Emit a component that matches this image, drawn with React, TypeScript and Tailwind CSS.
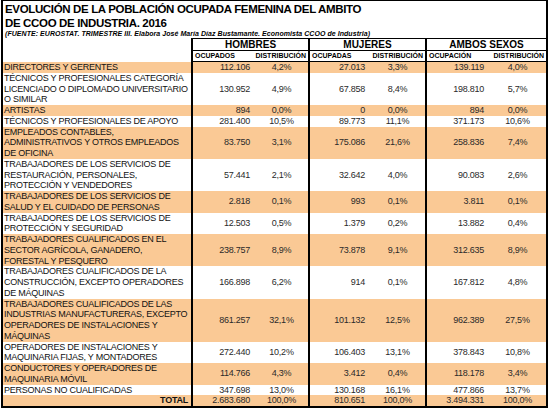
type Row = {
  label: string[]
  h: [string, string]
  m: [string, string]
  a: [string, string]
}

const rows: Row[] = [
  { label: ["DIRECTORES Y GERENTES"], h: ["112.106", "4,2%"], m: ["27.013", "3,3%"], a: ["139.119", "4,0%"] },
  {
    label: ["TÉCNICOS Y PROFESIONALES CATEGORÍA", "LICENCIADO O DIPLOMADO UNIVERSITARIO", "O SIMILAR"],
    h: ["130.952", "4,9%"],
    m: ["67.858", "8,4%"],
    a: ["198.810", "5,7%"],
  },
  { label: ["ARTISTAS"], h: ["894", "0,0%"], m: ["0", "0,0%"], a: ["894", "0,0%"] },
  { label: ["TÉCNICOS Y PROFESIONALES DE APOYO"], h: ["281.400", "10,5%"], m: ["89.773", "11,1%"], a: ["371.173", "10,6%"] },
  {
    label: ["EMPLEADOS CONTABLES,", "ADMINISTRATIVOS Y OTROS EMPLEADOS", "DE OFICINA"],
    h: ["83.750", "3,1%"],
    m: ["175.086", "21,6%"],
    a: ["258.836", "7,4%"],
  },
  {
    label: ["TRABAJADORES DE LOS SERVICIOS DE", "RESTAURACIÓN, PERSONALES,", "PROTECCIÓN Y VENDEDORES"],
    h: ["57.441", "2,1%"],
    m: ["32.642", "4,0%"],
    a: ["90.083", "2,6%"],
  },
  {
    label: ["TRABAJADORES DE LOS SERVICIOS DE", "SALUD Y EL CUIDADO DE PERSONAS"],
    h: ["2.818", "0,1%"],
    m: ["993", "0,1%"],
    a: ["3.811", "0,1%"],
  },
  {
    label: ["TRABAJADORES DE LOS SERVICIOS DE", "PROTECCIÓN Y SEGURIDAD"],
    h: ["12.503", "0,5%"],
    m: ["1.379", "0,2%"],
    a: ["13.882", "0,4%"],
  },
  {
    label: ["TRABAJADORES CUALIFICADOS EN EL", "SECTOR AGRÍCOLA, GANADERO,", "FORESTAL Y PESQUERO"],
    h: ["238.757", "8,9%"],
    m: ["73.878", "9,1%"],
    a: ["312.635", "8,9%"],
  },
  {
    label: ["TRABAJADORES CUALIFICADOS DE LA", "CONSTRUCCIÓN, EXCEPTO OPERADORES", "DE MÁQUINAS"],
    h: ["166.898", "6,2%"],
    m: ["914", "0,1%"],
    a: ["167.812", "4,8%"],
  },
  {
    label: [
      "TRABAJADORES CUALIFICADOS DE LAS",
      "INDUSTRIAS MANUFACTURERAS, EXCEPTO",
      "OPERADORES DE INSTALACIONES Y",
      "MÁQUINAS",
    ],
    h: ["861.257", "32,1%"],
    m: ["101.132", "12,5%"],
    a: ["962.389", "27,5%"],
  },
  {
    label: ["OPERADORES DE INSTALACIONES Y", "MAQUINARIA FIJAS, Y MONTADORES"],
    h: ["272.440", "10,2%"],
    m: ["106.403", "13,1%"],
    a: ["378.843", "10,8%"],
  },
  {
    label: ["CONDUCTORES Y OPERADORES DE", "MAQUINARIA MÓVIL"],
    h: ["114.766", "4,3%"],
    m: ["3.412", "0,4%"],
    a: ["118.178", "3,4%"],
  },
  { label: ["PERSONAS NO CUALIFICADAS"], h: ["347.698", "13,0%"], m: ["130.168", "16,1%"], a: ["477.866", "13,7%"] },
]

const total: Row = { label: ["TOTAL"], h: ["2.683.680", "100,0%"], m: ["810.651", "100,0%"], a: ["3.494.331", "100,0%"] }

const cols = "grid grid-cols-[190px_62px_55px_60px_57px_62px_57px]"

function DataRow({ row, shaded, isTotal }: { row: Row; shaded: boolean; isTotal?: boolean }) {
  const bg = shaded ? "bg-[#fac995]" : "bg-white"
  const num = "flex items-center justify-end pr-[5px] text-[#2a2a2a]"
  const pct = "flex items-center justify-center text-[#2a2a2a]"
  return (
    <div className={`${cols} ${bg} text-[9px] leading-[10.75px] tracking-[-0.25px]`}>
      <div
        className={`border-r-2 border-black pl-[1px] text-[#111] ${
          isTotal ? "text-right pr-[3px] font-bold" : ""
        }`}
      >
        {row.label.map((line) => (
          <div key={line} className="whitespace-nowrap">
            {line}
          </div>
        ))}
      </div>
      <div className={num}>{row.h[0]}</div>
      <div className={`${pct} border-r-2 border-black`}>{row.h[1]}</div>
      <div className={num}>{row.m[0]}</div>
      <div className={`${pct} border-r-2 border-black`}>{row.m[1]}</div>
      <div className={num}>{row.a[0]}</div>
      <div className={pct}>{row.a[1]}</div>
    </div>
  )
}

export default function App() {
  return (
    <div className="h-[415px] w-[550px] bg-white font-['Liberation_Sans',Arial,sans-serif] text-black">
      <div className="ml-[1px] w-[547px] border-x-2 border-b-2 border-t border-black">
        <div className="px-[2px] pt-[1px]">
          <p className="text-[11.5px] font-bold leading-[14px] tracking-[-0.35px]">
            EVOLUCIÓN DE LA POBLACIÓN OCUPADA FEMENINA DEL AMBITO
          </p>
          <p className="text-[11.5px] font-bold leading-[14px] tracking-[-0.35px]">DE CCOO DE INDUSTRIA. 2016</p>
          <p className="whitespace-nowrap text-[7px] font-bold italic leading-[8px] tracking-[0.05px]">
            (FUENTE: EUROSTAT. TRIMESTRE III. Elabora José María Díaz Bustamante. Economista CCOO de Industria)
          </p>
        </div>

        <div className="grid grid-cols-[190px_117px_117px_119px]">
          <div className="row-span-2 border-r-2 border-black" />
          {["HOMBRES", "MUJERES", "AMBOS SEXOS"].map((g, i) => (
            <div
              key={g}
              className={`border-y border-black text-center text-[10px] font-bold leading-[11px] ${
                i < 2 ? "border-r-2" : ""
              }`}
            >
              {g}
            </div>
          ))}
          {[
            ["OCUPADOS", "DISTRIBUCIÓN"],
            ["OCUPADAS", "DISTRIBUCIÓN"],
            ["OCUPACIÓN", "DISTRIBUCIÓN"],
          ].map(([a, b], i) => (
            <div
              key={a}
              className={`flex justify-between border-b border-black px-[2px] text-[7px] font-bold leading-[10px] ${
                i < 2 ? "border-r-2" : ""
              }`}
            >
              <span>{a}</span>
              <span>{b}</span>
            </div>
          ))}
        </div>

        {rows.map((r, i) => (
          <DataRow key={r.label[0] + i} row={r} shaded={i % 2 === 0} />
        ))}
        <DataRow row={total} shaded isTotal />
      </div>
    </div>
  )
}
